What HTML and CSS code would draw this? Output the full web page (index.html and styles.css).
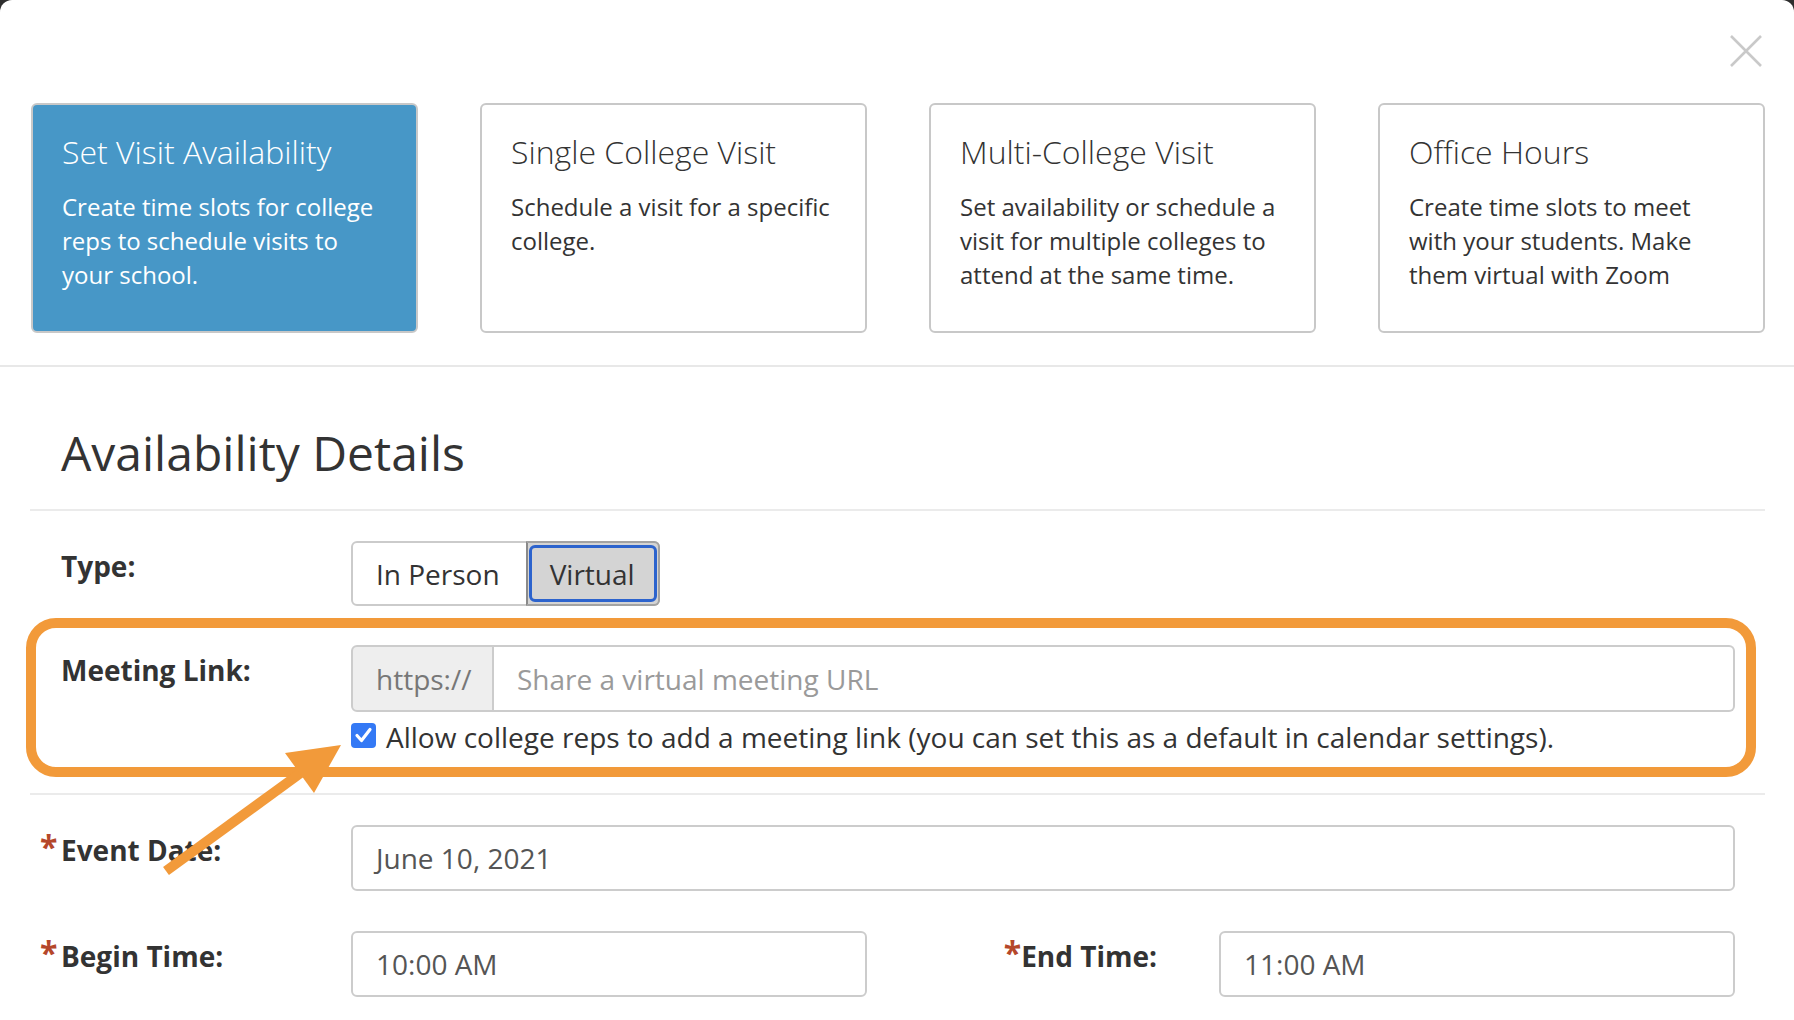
FILE: index.html
```html
<!DOCTYPE html>
<html lang="en">
<head>
<meta charset="utf-8">
<title>Availability Details</title>
<link rel="stylesheet" href="styles.css">
</head>
<body>
<div class="modal">
  <div class="topbar">
    <button class="close" aria-label="Close">
      <svg width="32" height="32" viewBox="0 0 32 32"><path d="M1 1L31 31M31 1L1 31" stroke="#c9c9c9" stroke-width="2.6" fill="none"/></svg>
    </button>
  </div>

  <div class="cards">
    <div class="card active">
      <div class="card-title">Set Visit Availability</div>
      <div class="card-desc">Create time slots for college reps to schedule visits to your school.</div>
    </div>
    <div class="card">
      <div class="card-title">Single College Visit</div>
      <div class="card-desc">Schedule a visit for a specific college.</div>
    </div>
    <div class="card">
      <div class="card-title">Multi-College Visit</div>
      <div class="card-desc">Set availability or schedule a visit for multiple colleges to attend at the same time.</div>
    </div>
    <div class="card">
      <div class="card-title">Office Hours</div>
      <div class="card-desc">Create time slots to meet with your students. Make them virtual with Zoom</div>
    </div>
  </div>

  <div class="section-rule"></div>

  <div class="details">
    <h2 class="heading">Availability Details</h2>
    <div class="rule"></div>

    <div class="row type-row">
      <div class="label">Type:</div>
      <div class="control">
        <div class="seg">
          <span class="seg-btn">In Person</span>
          <span class="seg-btn active"><span class="ring">Virtual</span></span>
        </div>
      </div>
    </div>

    <div class="row meeting-row">
      <div class="label">Meeting Link:</div>
      <div class="control">
        <div class="input-group">
          <span class="addon">https://</span>
          <span class="input placeholder">Share a virtual meeting URL</span>
        </div>
        <div class="check-line">
          <span class="checkbox"><svg width="25" height="25" viewBox="0 0 25 25"><rect x="0" y="0" width="25" height="25" rx="4" fill="#3479f5"/><path d="M6 12.5L10.5 17.5L19 6.5" stroke="#fff" stroke-width="3.2" fill="none" stroke-linecap="round" stroke-linejoin="round"/></svg></span>
          <span class="check-text">Allow college reps to add a meeting link (you can set this as a default in calendar settings).</span>
        </div>
      </div>
    </div>

    <div class="rule rule-after"></div>

    <div class="row date-row">
      <div class="label"><span class="req">*</span>Event Date:</div>
      <div class="control">
        <div class="input">June 10, 2021</div>
      </div>
    </div>

    <div class="row time-row">
      <div class="label"><span class="req">*</span>Begin Time:</div>
      <div class="input">10:00 AM</div>
      <div class="label label-right"><span class="req">*</span>End Time:</div>
      <div class="input">11:00 AM</div>
    </div>
  </div>

  <div class="highlight-box"></div>
  <svg class="arrow" width="1794" height="1020" viewBox="0 0 1794 1020">
    <line x1="166" y1="871" x2="302" y2="772" stroke="#f29a3a" stroke-width="10"/>
    <polygon points="341,745 285,753 314,793" fill="#f29a3a"/>
  </svg>
</div>
</body>
</html>
```

FILE: styles.css
```css
html, body {
  margin: 0;
  padding: 0;
}
body {
  background: #2e2e2e;
  font-family: "Open Sans", "Liberation Sans", sans-serif;
  color: #333;
  overflow: hidden;
}
.modal {
  position: relative;
  background: #fff;
  border-radius: 12px 12px 0 0;
  min-height: 1100px;
  width: 1794px;
}
.topbar {
  display: flex;
  justify-content: flex-end;
  height: 103px;
  box-sizing: border-box;
  padding: 35px 32px 0 0;
}
.close {
  border: 0;
  background: none;
  padding: 0;
  width: 32px;
  height: 32px;
  display: block;
}
.close svg { display: block; }

.cards {
  display: grid;
  grid-template-columns: repeat(4, 387px);
  column-gap: 62px;
  padding-left: 31px;
}
.card {
  box-sizing: border-box;
  height: 230px;
  border: 2px solid #c8c8c8;
  border-radius: 6px;
  padding: 29px 34px 0 29px;
  background: #fff;
}
.card.active {
  background: #4797c7;
  color: #fff;
}
.card-title {
  font-size: 32px;
  font-weight: 300;
  line-height: 36px;
}
.card-desc {
  margin-top: 20px;
  font-size: 24px;
  line-height: 34px;
}

.section-rule {
  margin-top: 32px;
  height: 2px;
  background: #e8e8e8;
}

.details {
  padding: 0 29px 0 30px;
}
.heading {
  margin: 0;
  padding: 57px 0 0 31px;
  font-size: 48px;
  font-weight: 400;
  line-height: 57px;
  color: #333;
}
.rule {
  margin-top: 28px;
  height: 2px;
  background: #ebebeb;
}
.rule.rule-after {
  margin-top: 37px;
}

.row {
  display: grid;
  grid-template-columns: 290px 1fr;
  padding: 0 30px 0 31px;
  font-size: 28px;
}
.label {
  font-weight: 700;
  line-height: 38px;
  padding-top: 6px;
  color: #333;
}
.req {
  display: inline-block;
  width: 21px;
  margin-left: -21px;
  color: #b5472a;
  font-size: 32px;
  line-height: 30px;
  position: relative;
  top: -2px;
}
.label-right .req {
  margin-left: 0;
  width: 20px;
}
.type-row { margin-top: 30px; }
.meeting-row { margin-top: 39px; }
.date-row { margin-top: 30px; }
.time-row {
  margin-top: 40px;
  grid-template-columns: 290px 516px 1fr 516px;
}
.label-right {
  text-align: right;
  padding-right: 62px;
}

.seg {
  display: inline-flex;
  height: 65px;
  box-sizing: border-box;
  border: 2px solid #cbcbcb;
  border-radius: 6px;
  vertical-align: top;
}
.seg-btn {
  display: flex;
  align-items: center;
  padding: 0 26px 0 23px;
  color: #333;
  line-height: 1;
}
.seg-btn.active {
  background: #d4d4d4;
  margin: -2px -2px -2px 0;
  border: 2px solid #a3a3a3;
  border-left-color: #8a8a8a;
  border-radius: 0 6px 6px 0;
  padding: 2px 1px 2px 1px;
  align-items: stretch;
}
.ring {
  display: flex;
  align-items: center;
  border: 3px solid #2c63cd;
  border-radius: 6px;
  padding: 0 19px 0 18px;
}

.input-group {
  display: flex;
  height: 67px;
}
.addon {
  box-sizing: border-box;
  width: 143px;
  display: flex;
  align-items: center;
  padding-left: 23px;
  background: #eeeeee;
  color: #777;
  border: 2px solid #cccccc;
  border-radius: 6px 0 0 6px;
}
.input {
  box-sizing: border-box;
  height: 66px;
  display: flex;
  align-items: center;
  padding-left: 23px;
  border: 2px solid #cccccc;
  border-radius: 6px;
  color: #555;
}
.input-group .input {
  flex: 1;
  height: 67px;
  border-left: 0;
  border-radius: 0 6px 6px 0;
}
.placeholder { color: #9a9a9a; }

.check-line {
  display: flex;
  align-items: flex-start;
  margin-top: 6px;
  line-height: 38px;
}
.checkbox {
  width: 25px;
  height: 25px;
  margin-top: 5px;
  margin-right: 10px;
  flex: none;
}
.checkbox svg { display: block; }
.check-text { color: #333; }

.highlight-box {
  position: absolute;
  left: 26px;
  top: 618px;
  width: 1730px;
  height: 159px;
  box-sizing: border-box;
  border: 10px solid #f29a3a;
  border-radius: 30px;
  pointer-events: none;
}
.arrow {
  position: absolute;
  left: 0;
  top: 0;
  pointer-events: none;
}
```
